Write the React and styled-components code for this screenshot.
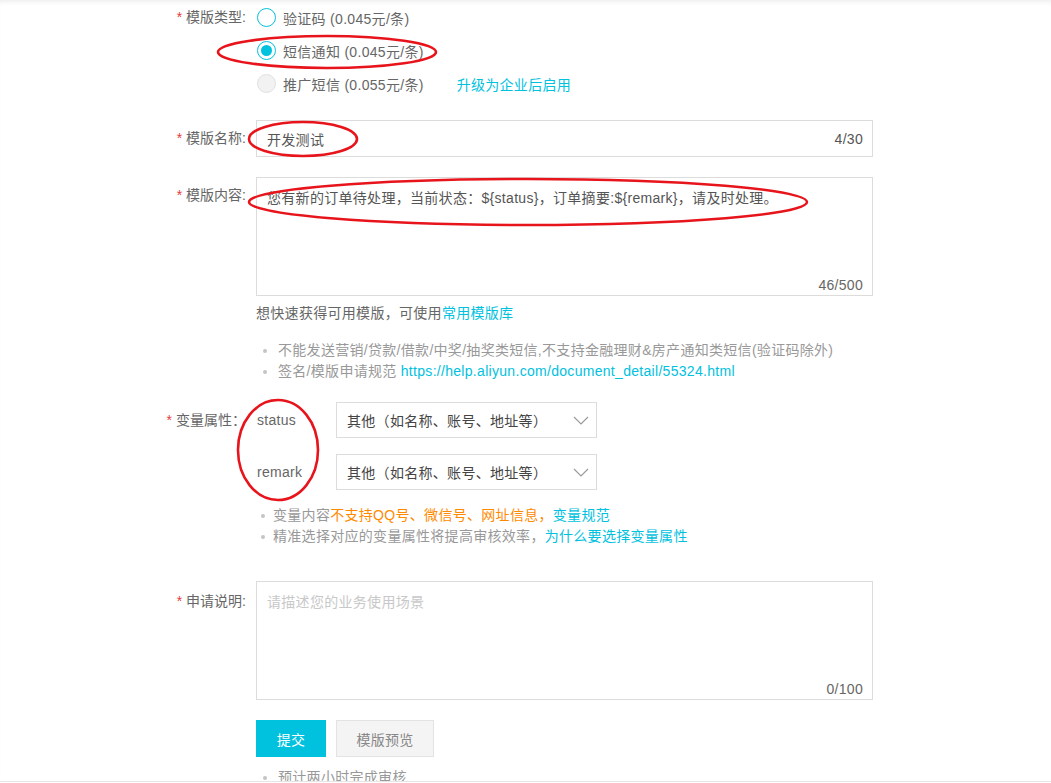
import React from 'react';
import styled, { createGlobalStyle } from 'styled-components';

const GlobalStyle = createGlobalStyle`
  * { box-sizing: border-box; }
  body {
    margin: 0;
    background: #fff;
    font-family: "Liberation Sans", "Noto Sans CJK SC", sans-serif;
    font-size: 14px;
    letter-spacing: 0.3px;
    text-spacing-trim: space-all;
    color: #666;
  }
`;

const Page = styled.div`
  position: relative;
  width: 1051px;
  height: 782px;
  overflow: hidden;
  border-bottom: 1px solid #e6e6e6;
  box-shadow: inset 0 5px 5px -3px rgba(0, 0, 0, 0.07);
  padding-top: 1px;
`;

const Form = styled.div`
  display: flex;
  flex-direction: column;
`;

const FormItem = styled.div`
  display: grid;
  grid-template-columns: 246px 617px;
  column-gap: 10px;
  margin-bottom: ${p => p.$mb ?? 20}px;
`;

const Label = styled.div`
  text-align: right;
  line-height: ${p => p.$lh || 36}px;
  color: #666;
  white-space: nowrap;
  letter-spacing: 0;
`;

const Star = styled.span`
  color: #e4393c;
  margin-right: 4px;
`;

const Control = styled.div`
  display: flex;
  flex-direction: column;
`;

const RadioRow = styled.div`
  display: flex;
  align-items: center;
  height: 33px;
  color: #666;
`;

const RadioCircle = styled.span`
  width: 19px;
  height: 19px;
  border-radius: 50%;
  border: 1px solid ${p => (p.$disabled ? '#e1e1e1' : '#00c1de')};
  background: ${p => (p.$disabled ? '#f2f2f2' : '#fff')};
  display: flex;
  align-items: center;
  justify-content: center;
  margin: 0 7px 0 1px;
  &::after {
    content: '';
    display: ${p => (p.$checked ? 'block' : 'none')};
    width: 11px;
    height: 11px;
    border-radius: 50%;
    background: #00c1de;
  }
`;

const Link = styled.span`
  color: #00c1de;
  margin-left: ${p => p.$ml || 0}px;
`;

const Warn = styled.span`
  color: #ff8a00;
`;

const InputBox = styled.div`
  height: 37px;
  border: 1px solid #dcdcdc;
  padding: 0 9px 0 10px;
  display: flex;
  align-items: center;
  justify-content: space-between;
  color: #555;
`;

const TextBox = styled.div`
  height: 119px;
  border: 1px solid #dcdcdc;
  padding: 10px 9px 0 10px;
  display: flex;
  flex-direction: column;
  line-height: 20px;
  color: #555;
`;

const Placeholder = styled.span`
  color: #c8c8c8;
`;

const Counter = styled.span`
  color: #666;
  margin-top: auto;
  align-self: flex-end;
`;

const Hint = styled.div`
  margin-top: 7px;
  line-height: 20px;
  color: #666;
`;

const Bullets = styled.ul`
  list-style: none;
  margin: ${p => p.$mt || 0}px 0 0;
  padding: 0 0 0 ${p => p.$pl || 7}px;
  color: #999;
`;

const Bullet = styled.li`
  display: flex;
  align-items: center;
  line-height: 21px;
  white-space: nowrap;
  &::before {
    content: '';
    width: 4px;
    height: 4px;
    border-radius: 50%;
    background: #c4c4c4;
    margin-right: ${p => p.$gap || 11}px;
    flex-shrink: 0;
  }
`;

const VarRow = styled.div`
  display: flex;
  align-items: center;
  height: 36px;
  margin-bottom: ${p => p.$mb || 0}px;
`;

const VarName = styled.div`
  width: 80px;
  padding-left: 1px;
  color: #666;
`;

const Select = styled.div`
  width: 261px;
  height: 36px;
  border: 1px solid #dcdcdc;
  padding: 0 7px 0 10px;
  display: flex;
  align-items: center;
  justify-content: space-between;
  color: #444;
`;

const Buttons = styled.div`
  display: flex;
  gap: 10px;
`;

const Button = styled.div`
  height: 37px;
  width: ${p => p.$w}px;
  display: flex;
  align-items: center;
  justify-content: center;
  background: ${p => (p.$primary ? '#00c1de' : '#f4f4f4')};
  border: 1px solid ${p => (p.$primary ? '#00c1de' : '#e3e3e3')};
  color: ${p => (p.$primary ? '#fff' : '#888')};
`;

const Marks = styled.svg`
  position: absolute;
  left: 0;
  top: 0;
  pointer-events: none;
`;

const Chevron = () => (
  <svg width="16" height="9" viewBox="0 0 16 9">
    <polyline points="1,1 8,8 15,1" fill="none" stroke="#9a9a9a" strokeWidth="1.2" />
  </svg>
);

const radios = [
  { label: '验证码 (0.045元/条)' },
  { label: '短信通知 (0.045元/条)', checked: true },
  { label: '推广短信 (0.055元/条)', disabled: true, extra: '升级为企业后启用' },
];

const vars = ['status', 'remark'];

const App = () => (
  <Page>
    <GlobalStyle />
    <Form>
      <FormItem $mb={20}>
        <Label $lh={33}><Star>*</Star>模版类型:</Label>
        <Control>
          {radios.map(r => (
            <RadioRow key={r.label}>
              <RadioCircle $checked={r.checked} $disabled={r.disabled} />
              {r.label}
              {r.extra && <Link $ml={33}>{r.extra}</Link>}
            </RadioRow>
          ))}
        </Control>
      </FormItem>

      <FormItem>
        <Label $lh={37}><Star>*</Star>模版名称:</Label>
        <InputBox>
          <span>开发测试</span>
          <span>4/30</span>
        </InputBox>
      </FormItem>

      <FormItem $mb={20}>
        <Label $lh={36}><Star>*</Star>模版内容:</Label>
        <Control>
          <TextBox>
            <span>您有新的订单待处理，当前状态：${'{status}'}，订单摘要:${'{remark}'}，请及时处理。</span>
            <Counter>46/500</Counter>
          </TextBox>
          <Hint>想快速获得可用模版，可使用<Link>常用模版库</Link></Hint>
          <Bullets $mt={17} $pl={7}>
            <Bullet>不能发送营销/贷款/借款/中奖/抽奖类短信,不支持金融理财&amp;房产通知类短信(验证码除外)</Bullet>
            <Bullet>签名/模版申请规范&nbsp;<Link>https://help.aliyun.com/document_detail/55324.html</Link></Bullet>
          </Bullets>
        </Control>
      </FormItem>

      <FormItem $mb={34}>
        <Label $lh={36}><Star>*</Star>变量属性：</Label>
        <Control>
          {vars.map((v, i) => (
            <VarRow key={v} $mb={i === 0 ? 16 : 0}>
              <VarName>{v}</VarName>
              <Select>
                <span>其他（如名称、账号、地址等）</span>
                <Chevron />
              </Select>
            </VarRow>
          ))}
          <Bullets $mt={15} $pl={5}>
            <Bullet $gap={8}>变量内容<Warn>不支持QQ号、微信号、网址信息，</Warn><Link>变量规范</Link></Bullet>
            <Bullet $gap={8}>精准选择对应的变量属性将提高审核效率，<Link>为什么要选择变量属性</Link></Bullet>
          </Bullets>
        </Control>
      </FormItem>

      <FormItem>
        <Label $lh={40}><Star>*</Star>申请说明:</Label>
        <TextBox>
          <Placeholder>请描述您的业务使用场景</Placeholder>
          <Counter>0/100</Counter>
        </TextBox>
      </FormItem>

      <FormItem $mb={0}>
        <span />
        <Control>
          <Buttons>
            <Button $primary $w={70}>提交</Button>
            <Button $w={98}>模版预览</Button>
          </Buttons>
          <Bullets $mt={10} $pl={7}>
            <Bullet>预计两小时完成审核</Bullet>
          </Bullets>
        </Control>
      </FormItem>
    </Form>

    <Marks width="1051" height="783" viewBox="0 0 1051 783">
      <g fill="none" stroke="#e8141c" strokeWidth="2.6">
        <ellipse cx="327" cy="52" rx="109" ry="16" />
        <ellipse cx="303" cy="139" rx="54" ry="17" />
        <ellipse cx="528" cy="202" rx="279" ry="23" />
        <ellipse cx="278" cy="450" rx="40" ry="50" />
      </g>
    </Marks>
  </Page>
);

export default App;
